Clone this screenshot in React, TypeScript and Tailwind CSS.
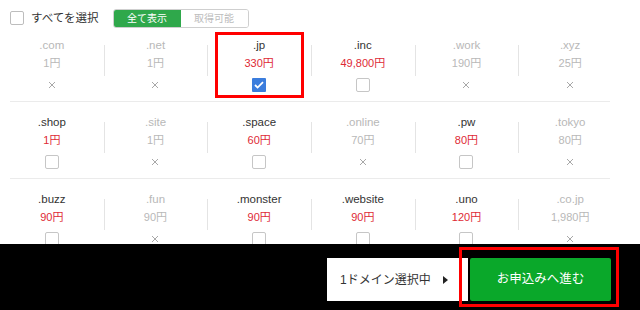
type Domain = { name: string; price: string; state: "no" | "box" | "checked" };

const rows: Domain[][] = [
  [
    { name: ".com", price: "1円", state: "no" },
    { name: ".net", price: "1円", state: "no" },
    { name: ".jp", price: "330円", state: "checked" },
    { name: ".inc", price: "49,800円", state: "box" },
    { name: ".work", price: "190円", state: "no" },
    { name: ".xyz", price: "25円", state: "no" },
  ],
  [
    { name: ".shop", price: "1円", state: "box" },
    { name: ".site", price: "1円", state: "no" },
    { name: ".space", price: "60円", state: "box" },
    { name: ".online", price: "70円", state: "no" },
    { name: ".pw", price: "80円", state: "box" },
    { name: ".tokyo", price: "80円", state: "no" },
  ],
  [
    { name: ".buzz", price: "90円", state: "box" },
    { name: ".fun", price: "90円", state: "no" },
    { name: ".monster", price: "90円", state: "box" },
    { name: ".website", price: "90円", state: "box" },
    { name: ".uno", price: "120円", state: "box" },
    { name: ".co.jp", price: "1,980円", state: "no" },
  ],
];

function Mark({ state }: { state: Domain["state"] }) {
  if (state === "checked") {
    return (
      <span className="flex h-[14px] w-[14px] items-center justify-center rounded-[1px] bg-[#3b7ddd]">
        <svg width="10" height="8" viewBox="0 0 10 8">
          <path d="M1 4l2.6 2.6L9 1.2" fill="none" stroke="#fff" strokeWidth="1.8" />
        </svg>
      </span>
    );
  }
  if (state === "box") {
    return <span className="block h-[14px] w-[14px] rounded-[2px] border border-[#c6c6c6] bg-white" />;
  }
  return (
    <svg width="14" height="14" viewBox="0 0 14 14">
      <path d="M4 4l6 6M10 4l-6 6" stroke="#a8a8a8" strokeWidth="1" />
    </svg>
  );
}

function Cell({ d, first }: { d: Domain; first: boolean }) {
  const ok = d.state !== "no";
  return (
    <div
      className={
        "relative flex h-[76px] flex-col items-center pt-[11px] " +
        (first ? "" : "before:absolute before:left-0 before:top-[20px] before:h-[31px] before:w-px before:bg-[#e4e4e4]")
      }
    >
      <div className={"h-[18px] text-[11.5px] leading-[18px] " + (ok ? "text-[#333]" : "text-[#b8b8b8]")}>{d.name}</div>
      <div className={"h-[18px] text-[11px] leading-[18px] " + (ok ? "text-[#de2a35]" : "text-[#b8b8b8]")}>{d.price}</div>
      <div className="mt-[6px] flex h-[14px] items-center justify-center">
        <Mark state={d.state} />
      </div>
      {d.state === "checked" && (
        <div className="absolute left-[8px] top-[7px] h-[66px] w-[89px] border-[3px] border-[#ff0000]" />
      )}
    </div>
  );
}

export default function App() {
  return (
    <div className="flex h-[310px] w-[640px] flex-col overflow-hidden bg-white font-['Liberation_Sans','Noto_Sans_CJK_JP',sans-serif]">
      <div className="h-[244px] overflow-hidden">
        {/* top bar */}
        <div className="flex h-[25px] items-start pl-[10px] pt-[9px]">
          <span className="mt-[2px] block h-[14px] w-[14px] rounded-[2px] border border-[#bdbdbd] bg-white" />
          <span className="ml-[7px] mt-[1px] text-[11.5px] leading-[16px] text-[#333]">すべてを選択</span>
          <div className="relative z-10 ml-[14px] flex h-[19px] overflow-hidden rounded-[3px] border border-[#cfcfcf]">
            <span className="flex w-[67px] items-center justify-center bg-[#2fa84b] text-[10px] text-white">全て表示</span>
            <span className="flex w-[67px] items-center justify-center bg-white text-[10px] text-[#bdbdbd]">取得可能</span>
          </div>
        </div>

        {rows.map((r, i) => (
          <div key={i}>
            <div className="grid w-[622px] grid-cols-6">
              {r.map((d, j) => (
                <Cell key={d.name} d={d} first={j === 0} />
              ))}
            </div>
            <div className="ml-[10px] h-px w-[600px] bg-[#ebebeb]" />
          </div>
        ))}
      </div>

      {/* footer */}
      <div className="relative flex flex-1 items-start justify-end gap-[2px] bg-black pr-[29px] pt-[14px]">
        <div className="flex h-[43px] w-[141px] items-center bg-white pl-[13px] text-[12px] text-[#333]">
          1ドメイン選択中
          <span className="ml-[12px] h-0 w-0 border-y-[4px] border-l-[5px] border-y-transparent border-l-[#222]" />
        </div>
        <div className="flex h-[43px] w-[141px] items-center justify-center rounded-[2px] bg-[#0aa82a] text-[12.5px] text-white">
          お申込みへ進む
        </div>
        <div className="absolute left-[459px] top-[3px] h-[60px] w-[160px] border-[3px] border-[#ff0000]" />
      </div>
    </div>
  );
}
